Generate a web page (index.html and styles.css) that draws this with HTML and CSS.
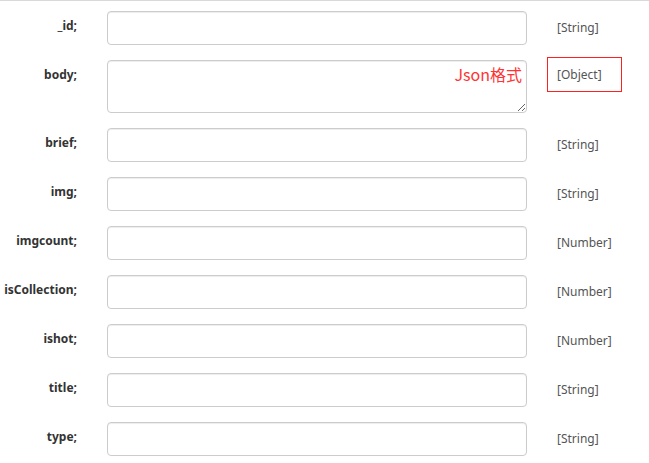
FILE: index.html
```html
<!DOCTYPE html>
<html>
<head>
<meta charset="utf-8">
<link rel="stylesheet" href="styles.css">
</head>
<body>
<form class="form">
  <div class="row">
    <label class="label">_id;</label>
    <input class="control" type="text">
    <span class="type">[String]</span>
  </div>
  <div class="row">
    <label class="label">body;</label>
    <div class="area-wrap">
      <textarea class="control area"></textarea>
      <span class="note">Json格式</span>
    </div>
    <div class="type-cell"><span class="type boxed">[Object]</span></div>
  </div>
  <div class="row">
    <label class="label">brief;</label>
    <input class="control" type="text">
    <span class="type">[String]</span>
  </div>
  <div class="row">
    <label class="label">img;</label>
    <input class="control" type="text">
    <span class="type">[String]</span>
  </div>
  <div class="row">
    <label class="label">imgcount;</label>
    <input class="control" type="text">
    <span class="type">[Number]</span>
  </div>
  <div class="row">
    <label class="label">isCollection;</label>
    <input class="control" type="text">
    <span class="type">[Number]</span>
  </div>
  <div class="row">
    <label class="label">ishot;</label>
    <input class="control" type="text">
    <span class="type">[Number]</span>
  </div>
  <div class="row">
    <label class="label">title;</label>
    <input class="control" type="text">
    <span class="type">[String]</span>
  </div>
  <div class="row">
    <label class="label">type;</label>
    <input class="control" type="text">
    <span class="type">[String]</span>
  </div>
</form>
</body>
</html>
```
FILE: styles.css
```css
html, body {
  margin: 0;
  padding: 0;
  background: #fff;
}
body {
  border-top: 1px solid #d9d9d9;
  font-family: "Noto Sans", "Open Sans", "Liberation Sans", sans-serif;
  color: #333;
}
.form {
  display: flex;
  flex-direction: column;
  gap: 15px;
  padding-top: 10px;
}
.row {
  display: grid;
  grid-template-columns: 77px 420px auto;
  column-gap: 30px;
  align-items: start;
}
.label {
  text-align: right;
  font-weight: bold;
  font-size: 12px;
  line-height: 20px;
  padding-top: 5px;
  color: #333;
  white-space: nowrap;
}
.control {
  box-sizing: border-box;
  width: 420px;
  height: 34px;
  margin: 0;
  padding: 6px 12px;
  border: 1px solid #ccc;
  border-radius: 4px;
  background: #fff;
  box-shadow: inset 0 1px 1px rgba(0,0,0,.075);
  font-family: inherit;
  font-size: 14px;
  outline: none;
}
.area-wrap {
  position: relative;
  width: 420px;
  height: 53px;
}
.area {
  display: block;
  height: 53px;
  resize: vertical;
}
.note {
  position: absolute;
  right: 5px;
  top: 4px;
  font-family: "Noto Sans CJK SC", "Noto Sans", sans-serif;
  font-size: 16px;
  line-height: 20px;
  color: #ff3333;
}
.type {
  font-size: 12px;
  line-height: 20px;
  padding-top: 7px;
  color: #555;
  white-space: nowrap;
}
.type-cell {
  display: flex;
  margin-left: -10px;
  margin-top: -3px;
}
.boxed {
  display: block;
  box-sizing: border-box;
  width: 75px;
  height: 35px;
  padding: 8px 0 0 10px;
  border: 1px solid #ff2020;
  padding-top: 7px;
  padding-left: 9px;
}
```
